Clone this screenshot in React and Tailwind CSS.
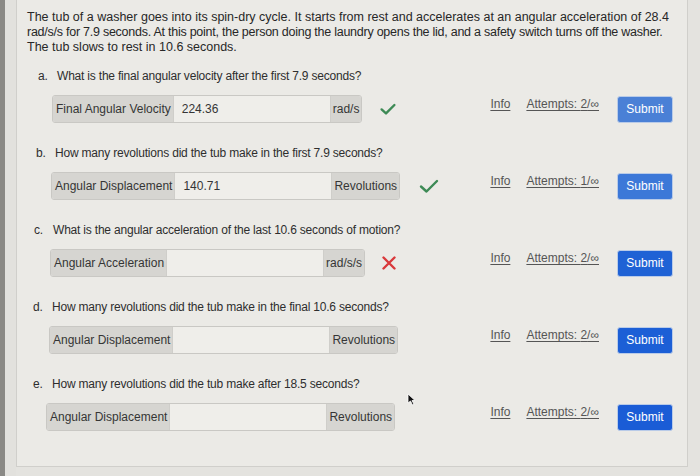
import React from "react";

const font = { fontFamily: '"Liberation Sans", Arial, sans-serif' };

function Check({ w }) {
  return (
    <svg width={w} height={Math.round(w * 0.72)} viewBox="0 0 20 14" className="shrink-0 overflow-visible">
      <polyline points="2,7.5 7.5,12.5 18,2" fill="none" stroke="#3d8a55" strokeWidth={2.4 * 20 / w} strokeLinecap="round" strokeLinejoin="round" />
    </svg>
  );
}

function Cross() {
  return (
    <svg width="14" height="14" viewBox="0 0 14 14" className="shrink-0">
      <path d="M1.5 1.5 L12.5 12.5 M12.5 1.5 L1.5 12.5" fill="none" stroke="#d9393b" strokeWidth="2.4" strokeLinecap="round" />
    </svg>
  );
}

const rows = [
  { q: "a.", text: "What is the final angular velocity after the first 7.9 seconds?", label: "Final Angular Velocity", value: "224.36", unit: "rad/s", mark: "check", cw: 16, attempts: "2", ml: "ml-[35px]", qml: "ml-[21px]", markMl: "ml-[18px]", btn: "bg-[#4a80d6]" },
  { q: "b.", text: "How many revolutions did the tub make in the first 7.9 seconds?", label: "Angular Displacement", value: "140.71", unit: "Revolutions", mark: "check", cw: 20, attempts: "1", ml: "ml-[34px]", qml: "ml-[19px]", markMl: "ml-[19px]", btn: "bg-[#3c78d8]" },
  { q: "c.", text: "What is the angular acceleration of the last 10.6 seconds of motion?", label: "Angular Acceleration", value: "", unit: "rad/s/s", mark: "cross", attempts: "2", ml: "ml-[33px]", qml: "ml-[17px]", markMl: "ml-[17px]", btn: "bg-[#1f62d5]" },
  { q: "d.", text: "How many revolutions did the tub make in the final 10.6 seconds?", label: "Angular Displacement", value: "", unit: "Revolutions", mark: null, attempts: "2", ml: "ml-[32px]", qml: "ml-[16px]", markMl: "", btn: "bg-[#1c5fd6]" },
  { q: "e.", text: "How many revolutions did the tub make after 18.5 seconds?", label: "Angular Displacement", value: "", unit: "Revolutions", mark: null, attempts: "2", ml: "ml-[29px]", qml: "ml-[16px]", markMl: "", btn: "bg-[#1a5cd6]" },
];

function Row({ r, first }) {
  return (
    <div className={first ? "mt-[13px]" : "mt-[22px]"}>
      <div className={`${r.qml} flex h-[16px] items-center text-[12px] leading-[16px] tracking-[-0.2px] text-[#2e2e2e]`}>
        <span className="w-[19px]">{r.q}</span>
        <span>{r.text}</span>
      </div>
      <div className="mt-[11px] flex h-[28px] items-center">
        <div className={`${r.ml} flex h-[28px] overflow-hidden rounded-[3px] border border-[#c9c8c4] text-[12px] text-[#353535]`}>
          <div className="flex items-center bg-[#d6d5d1] pl-[3px] pr-[2px]">{r.label}</div>
          <div className="flex w-[158px] items-center border-x border-[#cfceca] bg-[#efeeea] px-[8px]">{r.value}</div>
          <div className="flex items-center bg-[#d6d5d1] px-[2px]">{r.unit}</div>
        </div>
        {r.mark === "check" && <div className={r.markMl}><Check w={r.cw} /></div>}
        {r.mark === "cross" && <div className={r.markMl}><Cross /></div>}
        <div className="ml-auto mr-[14px] flex items-center">
          <span className="-mt-[10px] text-[12px] text-[#555] underline underline-offset-2">Info</span>
          <span className="-mt-[10px] ml-[16px] text-[12px] text-[#555] underline underline-offset-2">Attempts: {r.attempts}/∞</span>
          <button className={`ml-[18px] flex h-[27px] w-[56px] items-center justify-center rounded-[3px] border border-[#b9cbe8] ${r.btn} text-[12px] text-white`}>Submit</button>
        </div>
      </div>
    </div>
  );
}

export default function App() {
  return (
    <div style={font} className="relative flex h-[476px] w-[700px] overflow-hidden bg-[#e4e3df]">
      <div className="w-[5px] shrink-0 bg-[#8a8985]" />
      <div className="w-[11px] shrink-0 bg-[#e2e1dd]" />
      <div className="flex h-[467px] w-[672px] flex-col border-b border-l border-r border-[#d0cfcb] bg-[#ebeae6]">
        <p className="ml-[10px] mt-[10px] w-[660px] text-[12.5px] leading-[15px] text-[#272727]">
          <span className="block whitespace-nowrap">The tub of a washer goes into its spin-dry cycle. It starts from rest and accelerates at an angular acceleration of 28.4</span>
          <span className="block whitespace-nowrap tracking-[-0.25px]">rad/s/s for 7.9 seconds. At this point, the person doing the laundry opens the lid, and a safety switch turns off the washer.</span>
          <span className="block whitespace-nowrap">The tub slows to rest in 10.6 seconds.</span>
        </p>
        {rows.map((r, i) => (
          <Row key={i} r={r} first={i === 0} />
        ))}
      </div>
      <svg className="absolute left-[407px] top-[393px]" width="9" height="13" viewBox="0 0 9 13">
        <path d="M1 1 L1 10 L3.5 8 L5.5 12 L7 11.3 L5 7.5 L8 7.5 Z" fill="#111" stroke="#fff" strokeWidth="0.8" />
      </svg>
    </div>
  );
}
